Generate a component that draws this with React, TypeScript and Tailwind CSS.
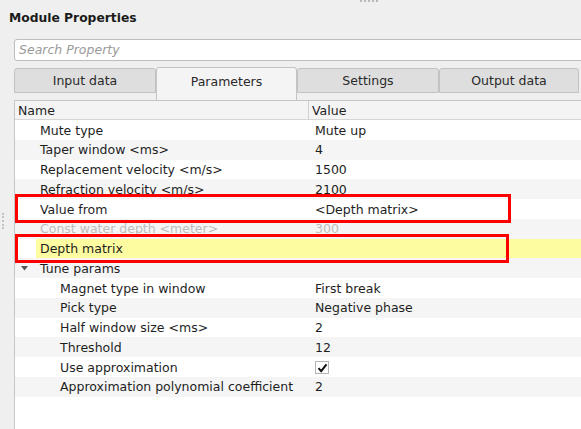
import React from "react";

type Row = {
  name: string;
  value?: string;
  level: 1 | 2;
  disabled?: boolean;
  highlight?: boolean;
  group?: boolean;
  check?: boolean;
};

const rows: Row[] = [
  { name: "Mute type", value: "Mute up", level: 1 },
  { name: "Taper window <ms>", value: "4", level: 1 },
  { name: "Replacement velocity <m/s>", value: "1500", level: 1 },
  { name: "Refraction velocity <m/s>", value: "2100", level: 1 },
  { name: "Value from", value: "<Depth matrix>", level: 1 },
  { name: "Const water depth <meter>", value: "300", level: 1, disabled: true },
  { name: "Depth matrix", value: "", level: 1, highlight: true },
  { name: "Tune params", level: 1, group: true },
  { name: "Magnet type in window", value: "First break", level: 2 },
  { name: "Pick type", value: "Negative phase", level: 2 },
  { name: "Half window size <ms>", value: "2", level: 2 },
  { name: "Threshold", value: "12", level: 2 },
  { name: "Use approximation", level: 2, check: true },
  { name: "Approximation polynomial coefficient", value: "2", level: 2 },
];

const tabs = [
  { label: "Input data", w: "w-[142px]" },
  { label: "Parameters", w: "w-[141px]", active: true },
  { label: "Settings", w: "w-[142px]" },
  { label: "Output data", w: "w-[140px]" },
];

function CheckBox() {
  return (
    <div className="w-[14px] h-[13px] bg-white border border-[#b4b4b4] flex items-center justify-center">
      <svg width="11" height="10" viewBox="0 0 11 10">
        <path d="M1.5 5.2 L4.2 8.2 L9.5 1.3" fill="none" stroke="#111" strokeWidth="2" />
      </svg>
    </div>
  );
}

function PropRow({ row, index }: { row: Row; index: number }) {
  const stripe = index % 2 === 1 ? "bg-[#f5f5f5]" : "bg-white";
  const text = row.disabled ? "text-[#bdbdbd]" : "text-[#1e1e1e]";
  const indent = row.level === 2 ? "w-[41px]" : "w-[21px]";
  return (
    <div className={`flex h-[19.75px] ${stripe} ${text}`}>
      <div className={`${indent} shrink-0 flex items-center justify-end pr-[8px] pt-[1px]`}>
        {row.group && (
          <svg width="7" height="5" viewBox="0 0 7 5">
            <path d="M0 0 L7 0 L3.5 4.5 Z" fill="#555" />
          </svg>
        )}
      </div>
      <div
        className={`flex flex-1 items-center pt-[2px] ${row.highlight ? "bg-[#fefca0]" : ""}`}
      >
        <div className={`${row.level === 2 ? "w-[253px]" : "w-[273px]"} shrink-0 pl-[4px] whitespace-nowrap`}>
          {row.name}
        </div>
        <div className="flex-1 pl-[6px] whitespace-nowrap flex items-center">
          {row.check ? <CheckBox /> : row.value}
        </div>
      </div>
    </div>
  );
}

export default function App() {
  return (
    <div
      className="relative w-[581px] h-[429px] overflow-hidden bg-[#efefef] flex flex-col text-[12.5px]"
      style={{ fontFamily: '"DejaVu Sans", "Noto Sans", sans-serif' }}
    >
      {/* splitter grips */}
      <div className="absolute left-[360px] top-0 w-[18px] h-[2px] border-t-2 border-dotted border-[#b8b8b8]" />
      <div className="absolute left-[2px] top-[213px] w-[2px] h-[16px] border-l-2 border-dotted border-[#c4c4c4]" />

      <div className="h-[36px] shrink-0 flex items-center pl-[9px] font-bold text-[12.3px] text-[#1b1b1b]">
        Module Properties
      </div>

      <div className="mt-[3px] ml-[14px] w-[580px] h-[22px] shrink-0 bg-white border border-[#bdbdbd] rounded-[3px] flex items-center pl-[4px] pt-[1px] italic text-[#9a9a9a]">
        Search Property
      </div>

      <div className="mt-[6px] ml-[14px] flex items-start shrink-0 h-[33px] text-[#2a2a2a]">
        {tabs.map((t) =>
          t.active ? (
            <div
              key={t.label}
              className={`${t.w} h-[33px] bg-[#f4f4f4] border border-b-0 border-[#c4c4c4] rounded-t-[3px] flex justify-center pt-[5px]`}
            >
              {t.label}
            </div>
          ) : (
            <div
              key={t.label}
              className={`${t.w} mt-[1px] h-[25px] bg-[#dedede] border border-[#c2c2c2] rounded-t-[3px] flex items-center justify-center pt-[2px]`}
            >
              {t.label}
            </div>
          )
        )}
      </div>

      <div className="ml-[14px] flex-1 bg-white border-l border-t border-[#c6c6c6] flex flex-col">
        <div className="flex h-[19px] bg-[#f4f4f4] border-b border-[#d6d6d6] text-[#1e1e1e]">
          <div className="w-[294px] shrink-0 flex items-center pl-[3px] pt-[2px] border-r border-[#d0d0d0]">
            Name
          </div>
          <div className="flex-1 flex items-center pl-[3px] pt-[2px]">Value</div>
        </div>
        {rows.map((r, i) => (
          <PropRow key={r.name} row={r} index={i} />
        ))}
      </div>

      {/* annotation frames */}
      <div className="absolute left-[15px] top-[194px] w-[496px] h-[29px] border-[3px] border-[#ff0000]" />
      <div className="absolute left-[15px] top-[234px] w-[494px] h-[29px] border-[3px] border-[#ff0000]" />
    </div>
  );
}
